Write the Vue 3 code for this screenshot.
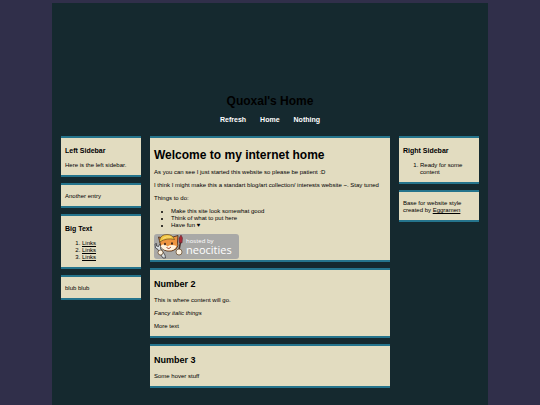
<template>
  <div class="container">
    <header>
      <h1 class="title">Quoxal's Home</h1>
      <nav>
        <a v-for="item in menu" :key="item" href="#">{{ item }}</a>
      </nav>
    </header>

    <div class="columns">
      <aside>
        <section class="box">
          <h3>Left Sidebar</h3>
          <p>Here is the left sidebar.</p>
        </section>
        <section class="box">
          <p>Another entry</p>
        </section>
        <section class="box">
          <h3>Big Text</h3>
          <ol>
            <li v-for="n in 3" :key="n"><a href="#">Links</a></li>
          </ol>
        </section>
        <section class="box">
          <p>blub blub</p>
        </section>
      </aside>

      <main>
        <section class="box welcome">
          <h1>Welcome to my internet home</h1>
          <p>As you can see I just started this website so please be patient :D</p>
          <p>I think I might make this a standart blog/art collection/ interests website ~. Stay tuned</p>
          <p>Things to do:</p>
          <ul>
            <li v-for="todo in todos" :key="todo">{{ todo }}</li>
          </ul>
          <a class="badge" href="#" aria-label="hosted by neocities">
            <svg width="85" height="25" viewBox="0 0 85 25">
              <rect width="85" height="25" rx="3" fill="#a9a9a7" />
              <!-- wrench -->
              <path d="M1 10 L2.500 9.500 L2.500 12 L4.500 12.500 L5.500 10.500 L7 12 L6.500 14.500 L11 21 L11.500 24 L9 24 L7.500 22 L4 15.500 L1.500 14 Z" fill="#d9dfe2" stroke="#3a3a3e" stroke-width=".8" />
              <!-- cat -->
              <path d="M6 9 L4.500 3 L9 4 L19 3 L24 1.500 L23.500 8 Q25 12 22 15 Q18 18 13 17 Q7 16 6 9 Z" fill="#ee9440" stroke="#4b3021" stroke-width=".9" />
              <path d="M6.500 12 Q10 9 13.500 12.500 Q17 10 22.500 12 Q21 16.500 15 16.500 Q8.500 16.500 6.500 12 Z" fill="#fff3df" />
              <path d="M5.500 6.500 Q6.500 .5 13 .5 Q18.500 .5 20.500 5.500 Q13 3.500 5.500 8 Z" fill="#f3c744" stroke="#6b4a20" stroke-width=".7" />
              <path d="M9 4.500 Q12 2 17 3" fill="none" stroke="#fbe28a" stroke-width=".8" />
              <ellipse cx="11" cy="10" rx=".9" ry="1.300" fill="#352019" />
              <ellipse cx="18" cy="9.500" rx=".9" ry="1.300" fill="#352019" />
              <path d="M12.500 13.500 Q15 16 17 13" fill="none" stroke="#9c3c28" stroke-width=".9" />
              <!-- brush -->
              <path d="M25 16 L26.500 8" stroke="#4a3029" stroke-width="1.500" />
              <path d="M25 8.500 L25 4 L27 1 L28.500 4 L28 9 Z" fill="#a82a35" stroke="#52212b" stroke-width=".5" />
              <!-- paws -->
              <circle cx="6.500" cy="18.500" r="2.500" fill="#fff4e1" stroke="#5b3d20" stroke-width=".7" />
              <circle cx="25" cy="18" r="3" fill="#fff4e1" stroke="#5b3d20" stroke-width=".7" />
              <text class="hosted" x="32" y="9">hosted by</text>
              <text class="brand" x="32" y="20">neocities</text>
            </svg>
          </a>
        </section>
        <section class="box">
          <h2>Number 2</h2>
          <p>This is where content will go.</p>
          <p><em>Fancy italic things</em></p>
          <p>More text</p>
        </section>
        <section class="box">
          <h2>Number 3</h2>
          <p>Some hover stuff</p>
        </section>
      </main>

      <aside>
        <section class="box">
          <h3>Right Sidebar</h3>
          <ol>
            <li>Ready for some content</li>
          </ol>
        </section>
        <section class="box">
          <p>Base for website style created by <a class="credit" href="#">Eggramen</a></p>
        </section>
      </aside>
    </div>
  </div>
</template>

<script setup>
const menu = ['Refresh', 'Home', 'Nothing'];

const todos = [
  'Make this site look somewhat good',
  'Think of what to put here',
  'Have fun ♥'
];
</script>

<style>
body {
  margin: 0;
  background: #302f4a;
}
</style>

<style scoped>
.container {
  margin: 3px 52px 0;
  min-height: calc(100vh - 3px);
  background: #15292f;
  color: #000;
  font-family: Arial, "Liberation Sans", sans-serif;
  font-size: 6px;
  line-height: 7px;
}

/* ==================== header ==================== */
header {
  padding: 91px 0 12px;
  text-align: center;
}

.title {
  margin: 0 0 8px;
  font-size: 12px;
  line-height: 14px;
}

nav {
  display: flex;
  justify-content: center;
  gap: 14px;
}

nav a {
  color: #fff;
  font-size: 7px;
  line-height: 8px;
  font-weight: bold;
  text-decoration: none;
}

/* ==================== columns ==================== */
.columns {
  display: grid;
  grid-template-columns: 1fr 3fr 1fr;
  gap: 9px;
  padding: 0 9px 18px;
}

aside,
main {
  display: flex;
  flex-direction: column;
  gap: 6px;
  min-width: 0;
}

.box {
  padding: 8px 4px 6px;
  background: #e2dcc0;
  border-top: 2px solid #25748c;
  border-bottom: 2px solid #25748c;
}

main .box {
  padding-top: 9px;
}

h1,
h2,
h3 {
  margin: 0 0 7px;
}

h1 {
  font-size: 12px;
  line-height: 14px;
}

h2 {
  font-size: 9px;
  line-height: 11px;
}

h3 {
  font-size: 7px;
  line-height: 9px;
}

p {
  margin: 0 0 6px;
}

p:last-child {
  margin-bottom: 0;
}

ul,
ol {
  margin: 0;
  padding-left: 17px;
}

.box a {
  color: inherit;
}

.credit {
  display: inline-block;
}

main .welcome {
  padding: 10px 4px 1px;
}

.badge {
  display: block;
  margin-top: 5px;
}

.badge svg {
  display: block;
  overflow: visible;
}

.hosted,
.brand {
  fill: #fff;
  font-family: "Open Sans", "Noto Sans", sans-serif;
  font-size: 11px;
}

.hosted {
  font-size: 6px;
}
</style>
